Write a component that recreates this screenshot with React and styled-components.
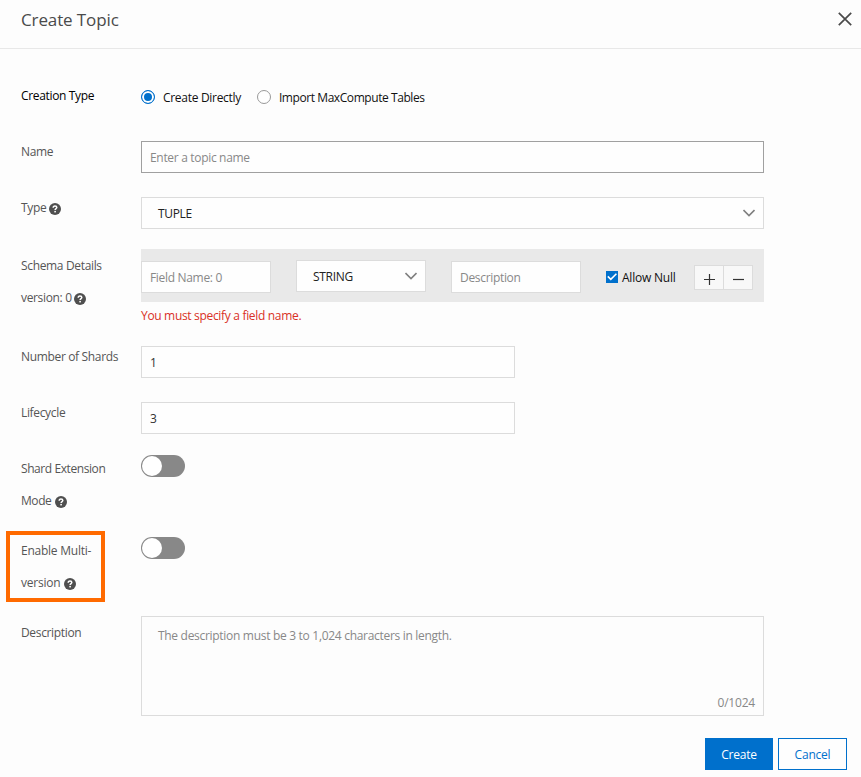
import React, { useState } from 'react';
import styled, { createGlobalStyle } from 'styled-components';

const App = () => {
  const [creationType, setCreationType] = useState('direct');
  const [allowNull, setAllowNull] = useState(true);
  const [shardExtension, setShardExtension] = useState(false);
  const [multiVersion, setMultiVersion] = useState(false);
  const [description, setDescription] = useState('');

  return (
    <>
      <GlobalStyle />
      <Dialog>
        <Header>
          <Title>Create Topic</Title>
          <CloseButton aria-label="Close">
            <svg width="14" height="14" viewBox="0 0 14 14">
              <path d="M0.8 0.8L13.2 13.2M13.2 0.8L0.8 13.2" fill="none" stroke="#4a4a4a" strokeWidth="1.7" />
            </svg>
          </CloseButton>
        </Header>

        <Body>
          <Row $height={56}>
            <Label $dark>Creation Type</Label>
            <RadioGroup>
              <RadioOption onClick={() => setCreationType('direct')}>
                <RadioDot $checked={creationType === 'direct'} />
                Create Directly
              </RadioOption>
              <RadioOption $tracking={-0.43} onClick={() => setCreationType('import')}>
                <RadioDot $checked={creationType === 'import'} />
                Import MaxCompute Tables
              </RadioOption>
            </RadioGroup>
          </Row>

          <Row $height={56}>
            <Label>Name</Label>
            <Control $top={5}>
              <Input $active placeholder="Enter a topic name" />
            </Control>
          </Row>

          <Row $height={57}>
            <Label>Type <HelpIcon /></Label>
            <Control $top={5}>
              <Select>TUPLE <Arrow /></Select>
            </Control>
          </Row>

          <Row $height={92}>
            <Label $top={1}>Schema Details<br />version: 0 <HelpIcon /></Label>
            <Control>
              <SchemaPanel>
                <Input $width={130} placeholder="Field Name: 0" />
                <SchemaSelect>STRING <Arrow /></SchemaSelect>
                <Input $width={130} placeholder="Description" />
                <CheckOption onClick={() => setAllowNull(!allowNull)}>
                  <CheckBox $checked={allowNull}>
                    <svg width="12" height="12" viewBox="0 0 12 12">
                      <path d="M1.8 5.4L4.8 8.4L10.4 2.8" fill="none" stroke="#fff" strokeWidth="1.6" />
                    </svg>
                  </CheckBox>
                  Allow Null
                </CheckOption>
                <Stepper>
                  <StepButton aria-label="Add field">
                    <svg width="11" height="11" viewBox="0 0 11 11">
                      <path d="M0 5.5H11M5.5 0V11" stroke="#333" strokeWidth="1.2" />
                    </svg>
                  </StepButton>
                  <StepButton aria-label="Remove field">
                    <svg width="11" height="11" viewBox="0 0 11 11">
                      <path d="M0 5.5H11" stroke="#333" strokeWidth="1.2" />
                    </svg>
                  </StepButton>
                </Stepper>
              </SchemaPanel>
              <ErrorText>You must specify a field name.</ErrorText>
            </Control>
          </Row>

          <Row $height={56}>
            <Label>Number of Shards</Label>
            <Control $top={5}>
              <Input $width={374} defaultValue="1" />
            </Control>
          </Row>

          <Row $height={56}>
            <Label>Lifecycle</Label>
            <Control $top={5}>
              <Input $width={374} defaultValue="3" />
            </Control>
          </Row>

          <Row $height={82}>
            <Label $tracking={-0.42}>Shard Extension<br />Mode <HelpIcon $gap={1} /></Label>
            <Control $top={2}>
              <Switch $on={shardExtension} onClick={() => setShardExtension(!shardExtension)} />
            </Control>
          </Row>

          <Row $height={81}>
            <Label $tracking={-0.24}>
              Enable Multi-<br />version <HelpIcon $gap={1} />
              <Highlight />
            </Label>
            <Control $top={2}>
              <Switch $on={multiVersion} onClick={() => setMultiVersion(!multiVersion)} />
            </Control>
          </Row>

          <Row $height={122}>
            <Label $top={1}>Description</Label>
            <Control>
              <TextBox>
                <TextArea
                  value={description}
                  onChange={(e) => setDescription(e.target.value)}
                  placeholder="The description must be 3 to 1,024 characters in length."
                />
                <Counter>{description.length}/1024</Counter>
              </TextBox>
            </Control>
          </Row>
        </Body>

        <Footer>
          <Button $primary>Create</Button>
          <Button>Cancel</Button>
        </Footer>
      </Dialog>
    </>
  );
};

export default App;

const HelpIcon = ({ $gap }) => (
  <HelpSvg $gap={$gap} width="12" height="12" viewBox="0 0 12 12">
    <circle cx="6" cy="6" r="6" fill="#4f4f4f" />
    <path d="M4.2 4.7C4.2 3.5 5 2.9 6 2.9S7.8 3.5 7.8 4.5C7.8 5.6 6.1 5.6 6.1 7" fill="none" stroke="#fff" strokeWidth="1.5" />
    <rect x="5.3" y="7.9" width="1.6" height="1.5" fill="#fff" />
  </HelpSvg>
);

const Arrow = () => (
  <ArrowSvg width="12" height="8" viewBox="0 0 12 8">
    <path d="M0.5 1L6 6.5L11.5 1" fill="none" stroke="#808080" strokeWidth="1.6" />
  </ArrowSvg>
);

// Styled Components
const GlobalStyle = createGlobalStyle`
  * {
    box-sizing: border-box;
  }

  body {
    margin: 0;
    background: #fdfdfd;
    overflow: hidden;
  }

  body, input, textarea, button {
    font-family: 'Open Sans', 'Noto Sans', sans-serif;
    font-size: 12px;
    letter-spacing: -0.32px;
  }
`;

const Dialog = styled.div`
  display: flex;
  flex-direction: column;
  width: 861px;
  height: 777px;
  color: #111;
`;

const Header = styled.div`
  display: flex;
  align-items: flex-start;
  justify-content: space-between;
  height: 49px;
  padding: 0 9px 0 21px;
  border-bottom: 1px solid #e8e8e8;
`;

const Title = styled.h1`
  margin: 0;
  font-size: 17px;
  font-weight: 400;
  line-height: 39px;
  letter-spacing: -0.12px;
  color: #4a4a4a;
`;

const CloseButton = styled.button`
  display: flex;
  margin-top: 12px;
  padding: 0;
  border: 0;
  background: none;
`;

const Body = styled.div`
  padding: 31px 97px 0 21px;
`;

const Row = styled.div`
  display: grid;
  grid-template-columns: 120px 1fr;
  height: ${({ $height }) => $height}px;
`;

const Label = styled.div`
  position: relative;
  padding-top: ${({ $top }) => $top || 0}px;
  line-height: 32px;
  letter-spacing: ${({ $tracking }) => $tracking || -0.34}px;
  white-space: nowrap;
  color: ${({ $dark }) => ($dark ? '#000' : '#555')};
`;

const HelpSvg = styled.svg`
  margin-left: ${({ $gap }) => $gap || 0}px;
  vertical-align: -2.5px;
`;

const ArrowSvg = styled.svg`
  margin-top: -1px;
`;

const Highlight = styled.div`
  position: absolute;
  top: -4px;
  left: -15px;
  width: 99px;
  height: 71px;
  border: 4px solid #ff6a00;
`;

const Control = styled.div`
  padding-top: ${({ $top }) => $top || 0}px;
`;

const RadioGroup = styled.div`
  display: flex;
  align-items: center;
  gap: 16px;
  height: 34px;
`;

const RadioOption = styled.div`
  display: flex;
  align-items: center;
  gap: 8px;
  letter-spacing: ${({ $tracking }) => $tracking || -0.3}px;
  white-space: nowrap;
`;

const RadioDot = styled.span`
  width: 14px;
  height: 14px;
  border: 1px solid ${({ $checked }) => ($checked ? '#0070cc' : '#999')};
  border-radius: 50%;
  background: ${({ $checked }) => ($checked ? '#0070cc' : '#fff')};
  box-shadow: inset 0 0 0 2px #fff;
`;

const Input = styled.input`
  display: block;
  width: ${({ $width }) => ($width ? `${$width}px` : '100%')};
  height: 32px;
  padding: 0 8px;
  border: 1px solid ${({ $active }) => ($active ? '#a0a0a0' : '#dcdcdc')};
  border-radius: 0;
  outline: none;
  background: #fefefe;
  color: #333;

  &::placeholder {
    color: #888;
  }
`;

const Select = styled.div`
  display: flex;
  align-items: center;
  justify-content: space-between;
  height: 32px;
  padding: 0 8px 0 16px;
  border: 1px solid #dcdcdc;
  background: #fefefe;
  color: #222;
`;

const SchemaPanel = styled.div`
  display: flex;
  align-items: flex-start;
  height: 53px;
  padding-top: 12px;
  background: #e9e9e9;
`;

const SchemaSelect = styled(Select)`
  width: 130px;
  margin: -1px 25px 0;
`;

const CheckOption = styled.div`
  display: flex;
  align-items: center;
  gap: 4px;
  width: 88px;
  height: 32px;
  margin-left: 25px;
  letter-spacing: -0.22px;
  white-space: nowrap;
`;

const CheckBox = styled.span`
  display: flex;
  width: 12px;
  height: 12px;
  background: ${({ $checked }) => ($checked ? '#0070cc' : '#fff')};
`;

const Stepper = styled.div`
  display: flex;
  height: 25px;
  margin-top: 4px;
  border: 1px solid #dcdcdc;
`;

const StepButton = styled.button`
  display: flex;
  align-items: center;
  justify-content: center;
  width: 28px;
  padding: 4px 0 0;
  border: 0;
  background: #f8f8f8;

  & + & {
    width: 29px;
    border-left: 1px solid #dcdcdc;
  }
`;

const ErrorText = styled.div`
  line-height: 27px;
  color: #d93026;
`;

const Switch = styled.div`
  width: 44px;
  height: 22px;
  padding: 1px;
  border-radius: 11px;
  background: ${({ $on }) => ($on ? '#0070cc' : '#888')};

  &::before {
    content: '';
    display: block;
    width: 20px;
    height: 20px;
    margin-left: ${({ $on }) => ($on ? 22 : 0)}px;
    border-radius: 50%;
    background: #fff;
  }
`;

const TextBox = styled.div`
  display: flex;
  flex-direction: column;
  height: 100px;
  border: 1px solid #dcdcdc;
`;

const TextArea = styled.textarea`
  flex: 1;
  padding: 10px 16px 0;
  border: 0;
  outline: none;
  resize: none;
  background: transparent;
  line-height: 18px;
  letter-spacing: -0.3px;
  color: #333;

  &::placeholder {
    color: #888;
  }
`;

const Counter = styled.div`
  padding-right: 8px;
  line-height: 25px;
  letter-spacing: -0.2px;
  text-align: right;
  color: #888;
`;

const Footer = styled.div`
  display: flex;
  justify-content: flex-end;
  gap: 5px;
  padding-right: 14px;
`;

const Button = styled.button`
  width: ${({ $primary }) => ($primary ? 68 : 69)}px;
  height: 32px;
  padding: 1px 0 0;
  border: 1px solid #0070cc;
  background: ${({ $primary }) => ($primary ? '#0070cc' : '#fefefe')};
  color: ${({ $primary }) => ($primary ? '#fff' : '#0070cc')};
  letter-spacing: -0.22px;
`;
